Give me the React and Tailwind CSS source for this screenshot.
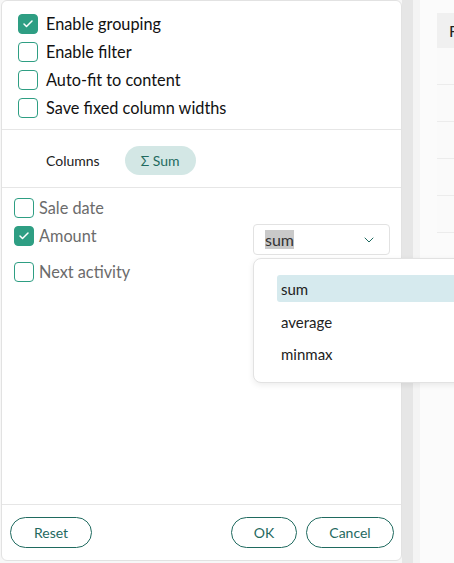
import { FiCheck, FiChevronDown } from 'react-icons/fi';

const Checkbox = ({ checked }) => (
  <span
    className={`flex h-[20px] w-[20px] shrink-0 items-center justify-center rounded-[4px] border ${
      checked ? 'border-[#2e9e83] bg-[#2e9e83]' : 'border-[#2e9e83] bg-white'
    }`}
  >
    {checked && <FiCheck className="text-white" size={12} strokeWidth={3} />}
  </span>
);

const options = [
  { label: 'Enable grouping', checked: true },
  { label: 'Enable filter', checked: false },
  { label: 'Auto-fit to content', checked: false },
  { label: 'Save fixed column widths', checked: false },
];

const PillButton = ({ children, width }) => (
  <button
    className={`${width} h-[31px] rounded-full border border-[#1f6a5f] bg-white text-[14px] text-[#1f6a5f]`}
  >
    {children}
  </button>
);

export default function App() {
  return (
    <div
      className="relative flex h-[563px] w-[454px] overflow-hidden bg-[#f7f7f7]"
      style={{ fontFamily: 'Lato, "Open Sans", sans-serif' }}
    >
      {/* settings panel */}
      <div className="ml-[1px] flex h-[561px] w-[401px] shrink-0 flex-col rounded-md border border-[#e2e2e2] bg-white">
        <div className="flex flex-col pb-[7px] pl-[16px] pt-[9px]">
          {options.map((o) => (
            <div key={o.label} className="flex h-[28px] items-center gap-[8px]">
              <Checkbox checked={o.checked} />
              <span className="text-[16.3px] text-[#111]">{o.label}</span>
            </div>
          ))}
        </div>

        <div className="flex h-[59px] items-center gap-[25px] border-y border-[#e6e6e6] pl-[44px] pt-[3px]">
          <span className="text-[14px] text-[#222]">Columns</span>
          <span className="flex h-[29px] w-[71px] items-center justify-center rounded-full bg-[#d3e7e5] text-[14px] text-[#1f6a60]">
            Σ Sum
          </span>
        </div>

        <div className="flex flex-1 flex-col pl-[12px] pr-[11px] pt-[10px]">
          <div className="flex h-[20px] items-center gap-[5px]">
            <Checkbox checked={false} />
            <span className="text-[16.3px] text-[#6b6b6b]">Sale date</span>
          </div>
          <div className="mt-[6px] flex items-start gap-[5px]">
            <div className="flex items-center gap-[5px]">
              <Checkbox checked />
              <span className="text-[16.3px] text-[#6b6b6b]">Amount</span>
            </div>
            <div className="ml-auto flex h-[31px] w-[137px] items-center justify-between rounded-[4px] border border-[#e2e2e2] pl-[11px] pr-[12px]">
              <span className="bg-[#c9c9c9] text-[16px] leading-[19px] text-[#333]">sum</span>
              <FiChevronDown className="text-[#1f6a60]" size={16} strokeWidth={1.5} />
            </div>
          </div>
          <div className="mt-[7px] flex h-[20px] items-center gap-[5px]">
            <Checkbox checked={false} />
            <span className="text-[16.3px] text-[#6b6b6b]">Next activity</span>
          </div>
        </div>

        <div className="flex items-center border-t border-[#e6e6e6] pl-[8px] pr-[7px] py-[12px]">
          <PillButton width="w-[82px]">Reset</PillButton>
          <div className="ml-auto flex gap-[9px]">
            <PillButton width="w-[66px]">OK</PillButton>
            <PillButton width="w-[88px]">Cancel</PillButton>
          </div>
        </div>
      </div>

      {/* scrollbar strip */}
      <div className="w-[11px] shrink-0 bg-[#e6e6e6]" />

      {/* background grid */}
      <div className="flex flex-1 bg-[#fbfbfb]">
        <div className="w-[7px] bg-[#f4f4f4]" />
        <div className="w-[17px]" />
        <div className="flex flex-1 flex-col pt-[13px]">
          <div className="flex h-[35px] items-center bg-[#f0f0f0] pl-[12px] text-[16px] text-[#222]">
            F
          </div>
          {[0, 1, 2, 3, 4].map((i) => (
            <div key={i} className="h-[37px] border-b border-[#ececec] bg-[#fafafa]" />
          ))}
        </div>
      </div>

      {/* dropdown menu */}
      <div className="absolute left-[253px] top-[258px] h-[125px] w-[215px] rounded-lg border border-[#e2e2e2] bg-white pl-[23px] pt-[16px] shadow-[0_2px_6px_rgba(0,0,0,0.08)]">
        <div className="flex h-[27px] items-center rounded-l-[3px] bg-[#d6eaee] pl-[4px] pt-[1px] text-[15px] text-[#222]">
          sum
        </div>
        <div className="mt-[6px] flex h-[27px] items-center pl-[4px] pt-[1px] text-[15px] text-[#222]">
          average
        </div>
        <div className="mt-[5px] flex h-[27px] items-center pl-[4px] pt-[1px] text-[15px] text-[#222]">
          minmax
        </div>
      </div>
    </div>
  );
}
